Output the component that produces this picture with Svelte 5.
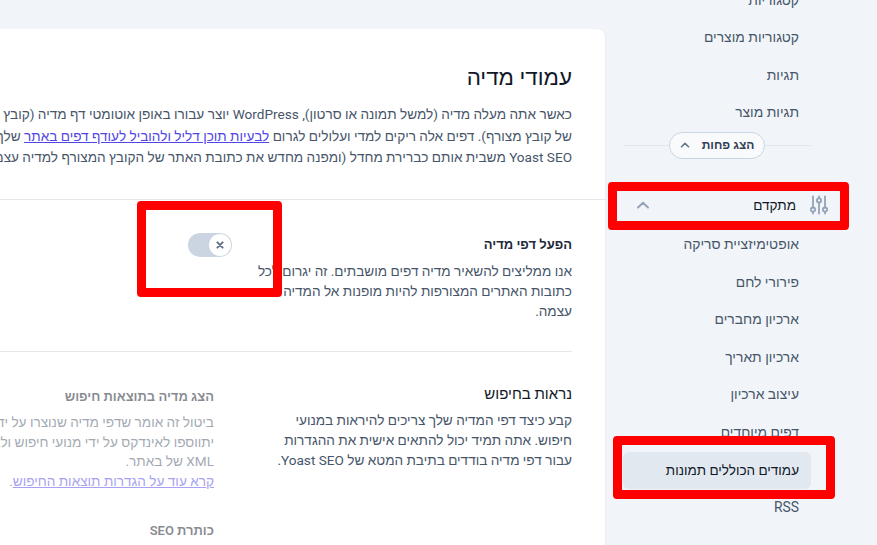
<script>
  const topItems = ['קטגוריות', 'קטגוריות מוצרים', 'תגיות', 'תגיות מוצר'];
  const advancedItems = [
    'אופטימיזציית סריקה',
    'פירורי לחם',
    'ארכיון מחברים',
    'ארכיון תאריך',
    'עיצוב ארכיון',
    'דפים מיוחדים',
    'עמודים הכוללים תמונות',
    'RSS'
  ];
  const activeItem = 'עמודים הכוללים תמונות';
</script>

<div class="page" dir="rtl">
  <aside class="sidebar">
    <ul class="menu top-menu">
      {#each topItems as item}
        <li class="menu-item">{item}</li>
      {/each}
    </ul>

    <div class="show-less">
      <button class="pill" type="button">
        הצג פחות
        <svg width="10" height="6" viewBox="0 0 10 6" fill="none" stroke="#64748b" stroke-width="1.6" stroke-linecap="round" stroke-linejoin="round">
          <path d="M1.5 4.8 5 1.4l3.5 3.4" />
        </svg>
      </button>
    </div>

    <div class="group-head">
      <svg class="group-icon" width="18" height="20" viewBox="0 0 18 20" fill="none" stroke="#94a3b8" stroke-width="1.8" stroke-linecap="round">
        <path d="M3 1.5v11M3 16.8v1.7M9 1.5v1.7M9 7.5v11M15 1.5v11M15 16.8v1.7" />
        <circle cx="3" cy="14.6" r="2.1" />
        <circle cx="9" cy="5.4" r="2.1" />
        <circle cx="15" cy="14.6" r="2.1" />
      </svg>
      <span class="group-title">מתקדם</span>
      <svg class="group-chevron" width="14" height="8" viewBox="0 0 14 8" fill="none" stroke="#94a3b8" stroke-width="2" stroke-linecap="round" stroke-linejoin="round">
        <path d="M2 6.5 7 1.8l5 4.7" />
      </svg>
    </div>

    <ul class="menu">
      {#each advancedItems as item}
        <li class="menu-item" class:active={item === activeItem}>{item}</li>
      {/each}
    </ul>
  </aside>

  <main class="card">
    <header class="intro">
      <h1>עמודי מדיה</h1>
      <p>
        כאשר אתה מעלה מדיה (למשל תמונה או סרטון), WordPress יוצר עבורו באופן אוטומטי דף מדיה (קובץ מצורף)<br />
        של קובץ מצורף). דפים אלה ריקים למדי ועלולים לגרום <a href="#thin">לבעיות תוכן דליל ולהוביל לעודף דפים באתר</a> שלך<br />
        Yoast SEO משבית אותם כברירת מחדל (ומפנה מחדש את כתובת האתר של הקובץ המצורף למדיה עצמה).
      </p>
    </header>

    <div class="body">
      <section class="row row-toggle">
        <div class="info">
          <h2>הפעל דפי מדיה</h2>
          <p>אנו ממליצים להשאיר מדיה דפים מושבתים. זה יגרום לכל כתובות האתרים המצורפות להיות מופנות אל המדיה עצמה.</p>
        </div>
        <div class="toggle">
          <span class="knob">
            <svg width="8" height="8" viewBox="0 0 8 8" stroke="#64748b" stroke-width="2" stroke-linecap="round">
              <path d="M1.4 1.4l5.2 5.2M6.6 1.4 1.4 6.6" />
            </svg>
          </span>
        </div>
      </section>

      <section class="row row-search">
        <div class="info">
          <h2 class="plain">נראות בחיפוש</h2>
          <p>קבע כיצד דפי המדיה שלך צריכים להיראות במנועי חיפוש. אתה תמיד יכול להתאים אישית את ההגדרות עבור דפי מדיה בודדים בתיבת המטא של Yoast SEO.</p>
        </div>
        <div class="fields">
          <h3>הצג מדיה בתוצאות חיפוש</h3>
          <p class="field-text">
            ביטול זה אומר שדפי מדיה שנוצרו על ידי WordPress לא<br />
            יתווספו לאינדקס על ידי מנועי חיפוש ולא יופיעו במפות אתר<br />
            XML של באתר.<br />
            <a href="#search">קרא עוד על הגדרות תוצאות החיפוש</a>.
          </p>
          <h3 class="seo-title">כותרת SEO</h3>
        </div>
      </section>
    </div>
  </main>

  <!-- red annotation frames from the screenshot -->
  <div class="mark mark-group"></div>
  <div class="mark mark-toggle"></div>
  <div class="mark mark-active"></div>
</div>

<style>
  :global(body) {
    margin: 0;
    background: #f1f5f9;
  }

  .page {
    position: relative;
    display: flex;
    width: 877px;
    height: 545px;
    overflow: hidden;
    background: #f1f5f9;
    font-family: Roboto, "Liberation Sans", sans-serif;
    font-size: 13.6px;
    color: #475569;
  }

  /* Sidebar */
  .sidebar {
    flex: 0 0 272px;
    box-sizing: border-box;
    padding: 0 66px 0 18px;
    margin-top: -18px;
    font-size: 13.9px;
  }

  .menu {
    list-style: none;
    margin: 0;
    padding: 0;
  }

  .menu-item {
    height: 37.5px;
    box-sizing: border-box;
    padding: 0 12px;
    display: flex;
    align-items: center;
    line-height: 1;
    white-space: nowrap;
    color: #475569;
  }

  .menu-item.active {
    background: #e2e8f0;
    border-radius: 6px;
    color: #111827;
    font-size: 13.5px;
    font-weight: 500;
  }

  .show-less {
    position: relative;
    display: flex;
    justify-content: center;
    margin-top: -0.5px;
    height: 27px;
  }

  .show-less::before {
    content: "";
    position: absolute;
    inset: 13px 0 auto 0;
    height: 1px;
    background: #e2e8f0;
  }

  .pill {
    position: relative;
    display: flex;
    align-items: center;
    gap: 12px;
    box-sizing: border-box;
    width: 96px;
    height: 27px;
    padding: 0;
    justify-content: center;
    white-space: nowrap;
    background: #f8fafc;
    border: 1px solid #cbd5e1;
    border-radius: 14px;
    font: inherit;
    font-size: 12px;
    font-weight: 600;
    color: #334155;
  }

  .group-head {
    display: flex;
    align-items: center;
    height: 30px;
    margin: 31px -17px 7px 0;
    color: #111827;
    font-size: 13.6px;
    font-weight: 500;
  }

  .group-icon {
    flex: none;
    margin-left: 14px;
  }

  .group-title {
    flex: 1;
  }

  .group-chevron {
    flex: none;
    margin-left: 13px;
  }

  /* Main card */
  .card {
    flex: 0 0 720px;
    margin-top: 29px;
    height: 560px;
    background: #fff;
    border-radius: 8px 8px 0 0;
    box-shadow: 0 1px 3px rgba(15, 23, 42, 0.08);
  }

  .intro {
    height: 171px;
    box-sizing: border-box;
    padding: 34px 33px 0 0;
    border-bottom: 1px solid #e5e7eb;
    white-space: nowrap;
  }

  h1 {
    margin: 0 0 13px;
    font-size: 22.4px;
    line-height: 28px;
    font-weight: 500;
    color: #111827;
  }

  .intro p {
    margin: 0;
    line-height: 21.5px;
  }

  a {
    color: #4f46e5;
    text-decoration: underline;
  }

  .body {
    padding-right: 33px;
  }

  .row {
    display: grid;
    grid-template-columns: 310px 1fr;
    column-gap: 48px;
  }

  .row-toggle {
    grid-template-columns: 316px 1fr;
    column-gap: 24px;
    height: 152px;
    box-sizing: border-box;
    padding-top: 35px;
    border-bottom: 1px solid #e5e7eb;
  }

  .row-search {
    padding-top: 32px;
  }

  h2 {
    margin: 0 0 6px;
    font-size: 13px;
    line-height: 20px;
    font-weight: 600;
    color: #1e293b;
  }

  h2.plain {
    font-size: 15px;
    font-weight: 400;
    color: #111827;
  }

  .info p {
    margin: 0;
    line-height: 20px;
  }

  .toggle {
    display: flex;
    align-items: center;
    justify-content: flex-end;
    direction: ltr;
    box-sizing: border-box;
    width: 44px;
    height: 24px;
    margin-top: -2px;
    padding: 1px;
    background: #cbd5e1;
    border-radius: 12px;
  }

  .knob {
    display: flex;
    align-items: center;
    justify-content: center;
    width: 22px;
    height: 22px;
    background: #fff;
    border-radius: 50%;
  }

  .fields {
    opacity: 0.5;
    margin-top: 3px;
    white-space: nowrap;
  }

  h3 {
    margin: 0 0 6px;
    font-size: 13px;
    line-height: 20px;
    font-weight: 600;
    color: #111827;
  }

  .field-text {
    margin: 0;
    line-height: 19.5px;
  }

  .seo-title {
    margin-top: 30px;
  }

  /* Annotation frames */
  .mark {
    position: absolute;
    box-sizing: border-box;
    border: 9px solid #f00;
    border-radius: 4px;
    pointer-events: none;
  }

  .mark-group {
    left: 608px;
    top: 182px;
    width: 241px;
    height: 48px;
  }

  .mark-toggle {
    left: 137px;
    top: 201px;
    width: 145px;
    height: 96px;
  }

  .mark-active {
    left: 613px;
    top: 436px;
    width: 222px;
    height: 63px;
  }
</style>
